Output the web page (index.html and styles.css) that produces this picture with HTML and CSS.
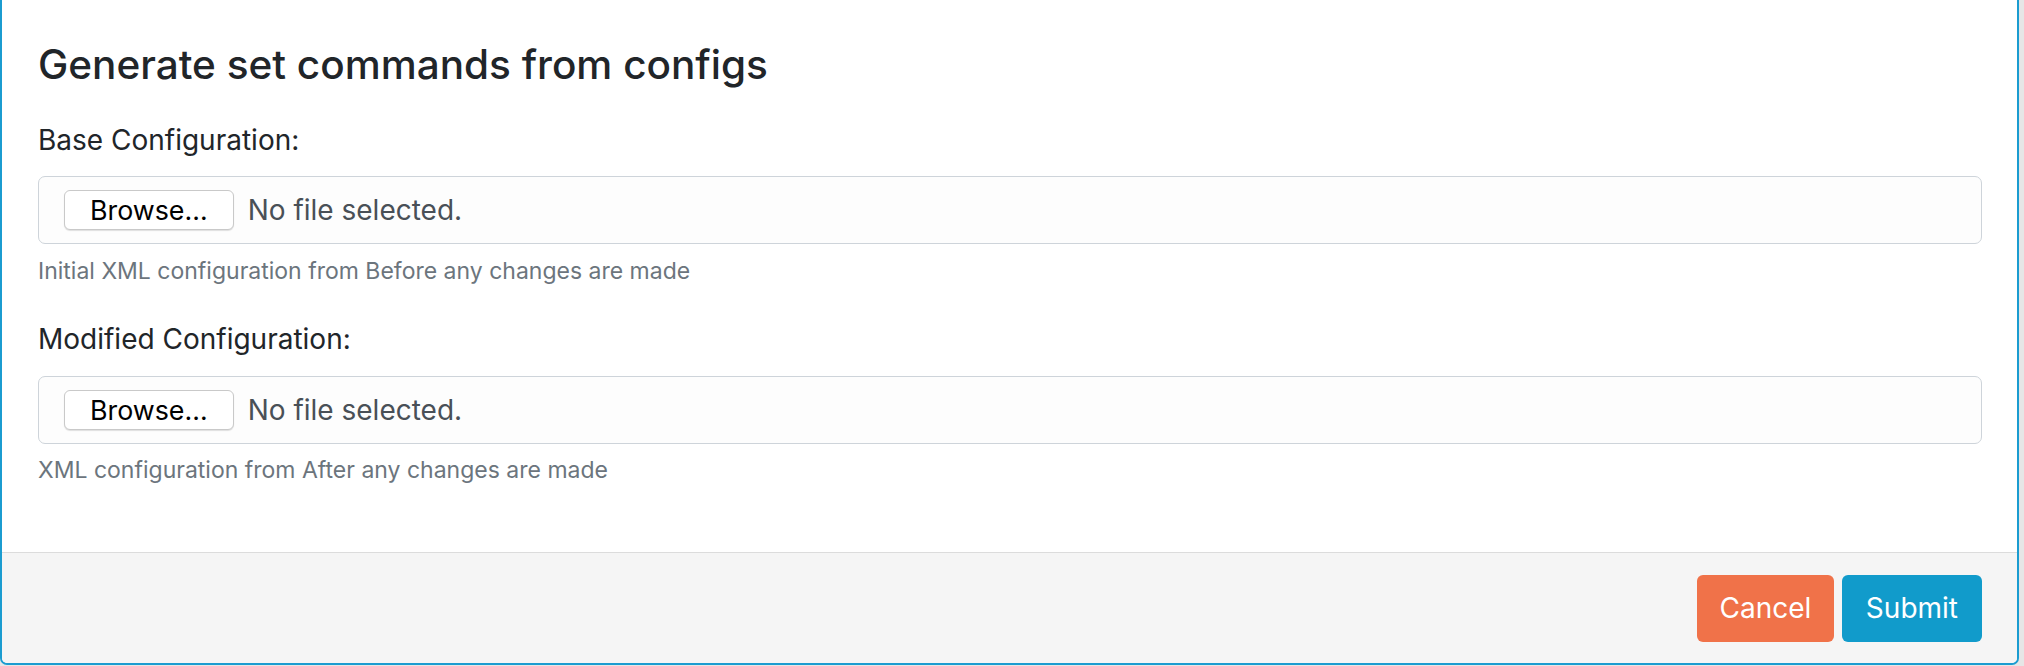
FILE: index.html
```html
<!DOCTYPE html>
<html lang="en">
<head>
<meta charset="utf-8">
<title>Generate set commands from configs</title>
<link rel="stylesheet" href="styles.css">
</head>
<body>
<div class="modal">
  <div class="modal-body">
    <h4 class="title">Generate set commands from configs</h4>
    <div class="form-group">
      <label class="label">Base Configuration:</label>
      <div class="file-input">
        <button class="browse" type="button">Browse…</button>
        <span class="file-name">No file selected.</span>
      </div>
      <small class="help">Initial XML configuration from Before any changes are made</small>
    </div>
    <div class="form-group last">
      <label class="label">Modified Configuration:</label>
      <div class="file-input">
        <button class="browse" type="button">Browse…</button>
        <span class="file-name">No file selected.</span>
      </div>
      <small class="help">XML configuration from After any changes are made</small>
    </div>
  </div>
  <div class="modal-footer">
    <button class="btn btn-cancel" type="button">Cancel</button>
    <button class="btn btn-submit" type="button">Submit</button>
  </div>
</div>
</body>
</html>
```
FILE: styles.css
```css
html, body {
  margin: 0;
  padding: 0;
  background: #e6e6e6;
}
body {
  font-family: Inter, "Liberation Sans", sans-serif;
  color: #212529;
  height: 666px;
  overflow: hidden;
}
.modal {
  width: 2019px;
  box-sizing: border-box;
  background: #fff;
  border: 2px solid #1b9cd0;
  border-top: none;
  border-radius: 0 0 7px 7px;
  overflow: hidden;
}
.modal-body {
  padding: 40.7px 35px 63.8px 36px;
}
.title {
  margin: 0 0 30px;
  font-size: 40.5px;
  line-height: 48px;
  font-weight: 500;
  color: #212529;
}
.form-group {
  margin-bottom: 29.9px;
}
.form-group.last {
  margin-bottom: 0;
}
.label {
  display: block;
  font-size: 28px;
  line-height: 42px;
  margin-bottom: 15.7px;
  color: #212529;
}
.file-input {
  height: 68px;
  box-sizing: border-box;
  border: 1px solid #ced4da;
  border-radius: 7px;
  background: #fdfdfd;
  display: flex;
  align-items: center;
  padding-left: 25px;
  gap: 14px;
}
.browse {
  height: 40px;
  box-sizing: border-box;
  padding: 0 25px;
  border: 1px solid #c9c9c9;
  border-radius: 6px;
  background: #fff;
  box-shadow: 0 1px 1px rgba(0,0,0,0.12);
  font-family: Inter, "Liberation Sans", sans-serif;
  font-size: 26.8px;
  line-height: 38px;
  color: #000;
}
.file-name {
  font-size: 28px;
  line-height: 40px;
  color: #495057;
}
.help {
  display: block;
  margin-top: 9.4px;
  font-size: 23px;
  line-height: 34.5px;
  color: #6c757d;
}
.modal-footer {
  background: #f5f5f5;
  border-top: 1px solid #dcdcdc;
  padding: 22px 35px 21px;
  display: flex;
  justify-content: flex-end;
  gap: 8px;
}
.btn {
  height: 67px;
  border: none;
  border-radius: 6px;
  padding: 0 24px;
  font-family: Inter, "Liberation Sans", sans-serif;
  font-size: 28px;
  line-height: 67px;
  color: #fff;
}
.btn-cancel {
  background: #f07249;
  padding: 0 22.5px;
}
.btn-submit {
  background: #119bcb;
}
```
